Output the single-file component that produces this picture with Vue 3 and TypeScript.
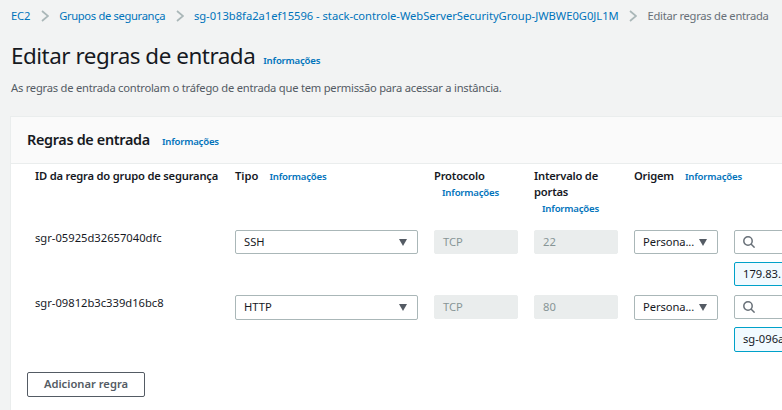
<script setup lang="ts">
interface Rule {
  id: string
  type: string
  protocol: string
  port: string
  source: string
  token: string
}

const crumbs: string[] = [
  'EC2',
  'Grupos de segurança',
  'sg-013b8fa2a1ef15596 - stack-controle-WebServerSecurityGroup-JWBWE0G0JL1M',
]

const rules: Rule[] = [
  { id: 'sgr-05925d32657040dfc', type: 'SSH', protocol: 'TCP', port: '22', source: 'Persona...', token: '179.83.' },
  { id: 'sgr-09812b3c339d16bc8', type: 'HTTP', protocol: 'TCP', port: '80', source: 'Persona...', token: 'sg-096a' },
]
</script>

<template>
  <main class="page">
    <nav class="crumbs">
      <template v-for="(crumb, i) in crumbs" :key="crumb">
        <a :class="['crumb', 'crumb-' + i]">{{ crumb }}</a>
        <svg class="chevron" viewBox="0 0 8 12"><path d="M1 1l6 5-6 5" /></svg>
      </template>
      <span class="current">Editar regras de entrada</span>
    </nav>

    <header class="title">
      <h1>Editar regras de entrada</h1>
      <a class="info">Informações</a>
    </header>
    <p class="description">
      As regras de entrada controlam o tráfego de entrada que tem permissão para acessar a instância.
    </p>

    <section class="panel">
      <header class="panel-head">
        <h2>Regras de entrada</h2>
        <a class="info">Informações</a>
      </header>

      <div class="panel-body">
        <div class="grid labels">
          <div><span class="label">ID da regra do grupo de segurança</span></div>
          <div><span class="label short">Tipo</span><a class="info gap">Informações</a></div>
          <div class="stack"><span class="label">Protocolo</span><a class="info">Informações</a></div>
          <div class="stack"><span class="label">Intervalo de<br />portas</span><a class="info">Informações</a></div>
          <div class="wide"><span class="label">Origem</span><a class="info gap">Informações</a></div>
        </div>

        <div v-for="rule in rules" :key="rule.id" class="grid rule">
          <span class="rule-id">{{ rule.id }}</span>
          <div class="select">
            <span>{{ rule.type }}</span>
            <svg class="caret" viewBox="0 0 8 7"><path d="M0 0h8L4 7z" /></svg>
          </div>
          <div class="disabled">{{ rule.protocol }}</div>
          <div class="disabled">{{ rule.port }}</div>
          <div class="select">
            <span class="source">{{ rule.source }}</span>
            <svg class="caret" viewBox="0 0 8 7"><path d="M0 0h8L4 7z" /></svg>
          </div>
          <div class="target">
            <div class="search">
              <svg viewBox="0 0 12 12"><circle cx="5" cy="5" r="4.2" /><path d="M8 8l3.6 3.6" /></svg>
            </div>
            <div class="token">{{ rule.token }}</div>
          </div>
        </div>

        <button class="add" type="button">Adicionar regra</button>
      </div>
    </section>
  </main>
</template>

<style>
body {
  background: #f2f3f3;
  overflow: hidden;
}
</style>

<style scoped>
.page {
  box-sizing: border-box;
  width: 782px;
  height: 410px;
  padding: 8px 0 0 11px;
  overflow: hidden;
  background: #f2f3f3;
  color: #16191f;
  font-family: 'Noto Sans', sans-serif;
  font-size: 11.2px;
  line-height: 16px;
  white-space: nowrap;
}

.crumbs {
  display: flex;
  align-items: center;
  height: 16px;
  color: #687078;
}

.crumb {
  color: #0073bb;
}

.crumb-0 {
  letter-spacing: -0.1px;
}

.crumb-1 {
  letter-spacing: -0.34px;
}

.crumb-2 {
  letter-spacing: -0.02px;
}

.current {
  letter-spacing: -0.27px;
}

.chevron {
  flex: none;
  width: 8px;
  height: 12px;
  margin: 0 10.4px;
  fill: none;
  stroke: #aab7b8;
  stroke-width: 1.7;
}

.title {
  display: flex;
  align-items: baseline;
  height: 32px;
  margin-top: 16px;
}

h1 {
  margin: 0;
  font-size: 22.4px;
  font-weight: 400;
  line-height: 32px;
  letter-spacing: -0.46px;
}

.info {
  color: #0073bb;
  font-size: 9.6px;
  font-weight: 600;
  letter-spacing: -0.2px;
}

.title .info {
  margin-left: 8px;
}

.description {
  margin: 8px 0 0;
  color: #545b64;
  letter-spacing: -0.235px;
}

.panel {
  width: 900px;
  height: 340px;
  margin: 20px 0 0 -1px;
  border: 1px solid #eaeded;
  background: #fff;
}

.panel-head {
  display: flex;
  align-items: baseline;
  box-sizing: border-box;
  height: 47px;
  padding: 12px 16px 0;
  border-bottom: 1px solid #eaeded;
  background: #fafafa;
}

h2 {
  margin: 0;
  font-size: 14.4px;
  font-weight: 600;
  line-height: 22px;
  letter-spacing: -0.32px;
}

.panel-head .info {
  margin-left: 12px;
}

.panel-body {
  padding: 4px 16px 0 24px;
}

.grid {
  display: grid;
  grid-template-columns: 184px 183px 84px 84px 84px 160px;
  column-gap: 16px;
}

.labels {
  height: 62px;
}

.label {
  font-weight: 600;
  letter-spacing: -0.2px;
}

.short {
  letter-spacing: 0;
}

.gap {
  margin-left: 11px;
}

.stack .info {
  display: block;
  margin-left: 8px;
  padding-top: 1px;
}

.wide {
  grid-column: span 2;
}

.rule {
  align-items: start;
  height: 65px;
}

.select,
.disabled,
.search,
.token {
  display: flex;
  align-items: center;
  box-sizing: border-box;
  height: 24px;
  padding: 0 8px;
  border: 1px solid #aab7b8;
  border-radius: 2px;
}

.select {
  justify-content: space-between;
  padding-right: 10px;
}

.source {
  letter-spacing: -0.08px;
}

.rule + .rule .select,
.rule + .rule .token {
  height: 25px;
  padding-bottom: 1px;
}

.caret {
  width: 8px;
  height: 7px;
  fill: #545b64;
}

.disabled {
  border-color: #eaeded;
  background: #eaeded;
  color: #879596;
}

.search svg {
  width: 12px;
  height: 12px;
  fill: none;
  stroke: #687078;
  stroke-width: 1.5;
}

.token {
  margin-top: 8px;
  border-color: #00a1c9;
  background: #f1faff;
}

.add {
  box-sizing: border-box;
  display: block;
  width: 118px;
  height: 25px;
  margin: 12px 0 0 -8px;
  padding: 0 0 1px;
  border: 1px solid #545b64;
  border-radius: 2px;
  background: #fff;
  color: #545b64;
  font: 600 11.2px/16px 'Noto Sans', sans-serif;
  letter-spacing: 0;
}
</style>
